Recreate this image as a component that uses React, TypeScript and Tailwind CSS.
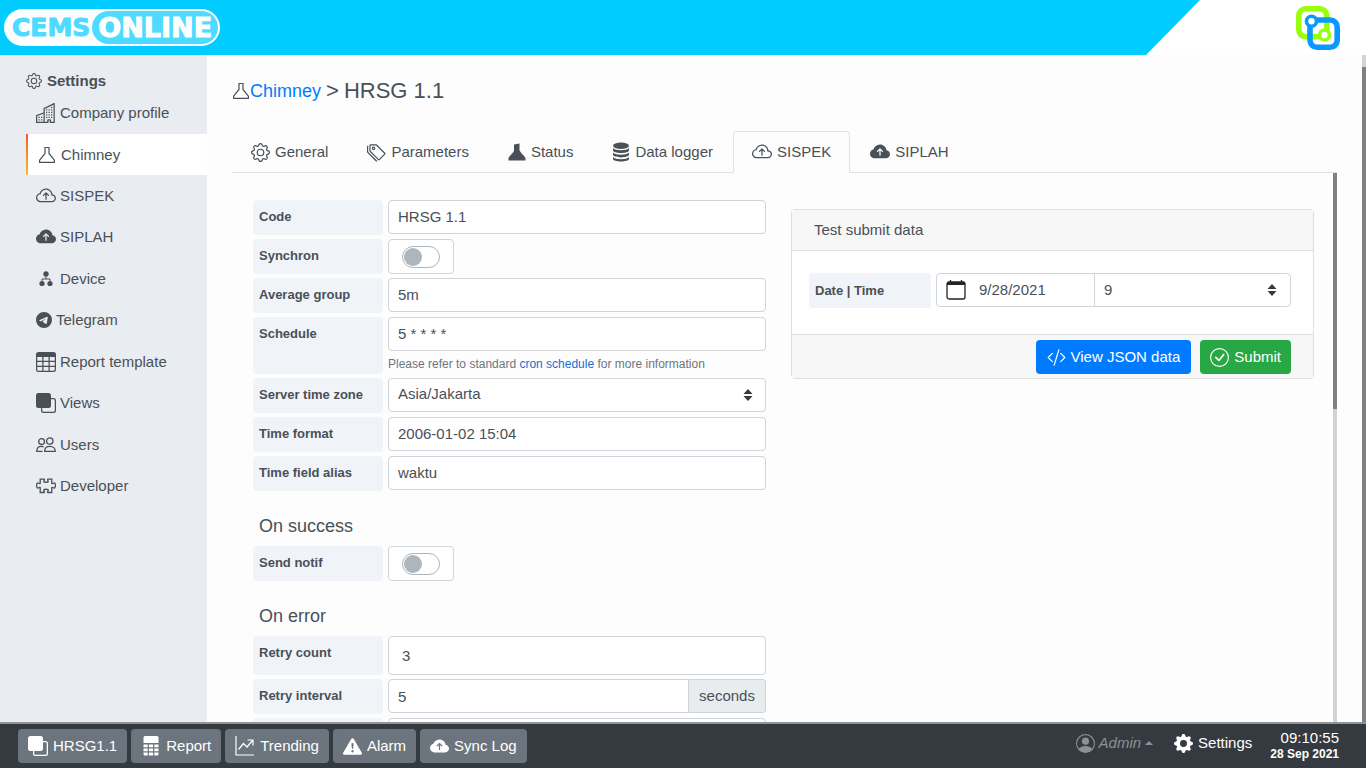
import React from "react";
import {
  BsBuildings,
  BsCheckCircle,
  BsCloudArrowUp,
  BsCloudArrowUpFill,
  BsCodeSlash,
  BsExclamationTriangleFill,
  BsFront,
  BsGear,
  BsGearFill,
  BsPersonCircle,
  BsTable,
  BsTags,
  BsTelegram,
} from "react-icons/bs";

type IconProps = { className?: string };

function Flask({ className = "" }: IconProps) {
  return (
    <svg viewBox="0 0 18 18" fill="none" stroke="currentColor" strokeWidth="1.2" className={className} aria-hidden="true">
      <path d="M6.500 1.500h5M7 1.500v6L1.600 14.200v2.200h14.800v-2.200L11 7.500v-6" />
    </svg>
  );
}

function FlaskSolid({ className = "" }: IconProps) {
  return (
    <svg viewBox="0 0 18 18" fill="currentColor" className={className} aria-hidden="true">
      <path d="M6 1.500 11.500.500V7.500c1 2 4 4.500 6 7.500v2.500H.5V15c1.500-3 5-5 5.500-7.500z" />
    </svg>
  );
}

function DeviceTree({ className = "" }: IconProps) {
  return (
    <svg viewBox="0 0 20 18" fill="currentColor" className={className} aria-hidden="true">
      <circle cx="10" cy="4" r="2.700" />
      <circle cx="6" cy="13.500" r="2.600" />
      <circle cx="14" cy="13.500" r="2.600" />
      <path d="M10 6v3M6 11V9h8v2" fill="none" stroke="currentColor" />
    </svg>
  );
}

function People({ className = "" }: IconProps) {
  return (
    <svg viewBox="0 0 20 16" fill="none" stroke="currentColor" strokeWidth="1.300" className={className} aria-hidden="true">
      <circle cx="13.800" cy="4" r="3.200" />
      <circle cx="5.600" cy="4.600" r="2.900" />
      <path d="M8.600 14.400c0-3 2-5 5.200-5s5.500 2 5.500 5zM6.500 14.400H.7c0-3.200 1.500-5 4.600-5 1 0 1.800.2 2.400.600" />
    </svg>
  );
}

function Puzzle({ className = "" }: IconProps) {
  return (
    <svg viewBox="0 0 20 16" fill="none" stroke="currentColor" strokeWidth="1.300" className={className} aria-hidden="true">
      <path d="M4.200 1.200h4c.8 1-.5 1.300-.5 2.300 0 1.200 4.600 1.200 4.600 0 0-1-1.300-1.300-.5-2.300h4v4.200c1.200.7 1.500-.5 2.400-.5 1.600 0 1.600 5.200 0 5.200-.9 0-1.200-1.200-2.400-.5v4.900h-4c-.8-1 .5-1.300.5-2.300 0-1.300-4.600-1.300-4.600 0 0 1 1.300 1.300.5 2.300h-4V9.600c-1.200-.7-1.500.5-2.400.5-1.600 0-1.600-5.200 0-5.200.9 0 1.200 1.200 2.400.5z" />
    </svg>
  );
}

function Database({ className = "" }: IconProps) {
  return (
    <svg viewBox="0 0 18 20" fill="currentColor" className={className} aria-hidden="true">
      <ellipse cx="9" cy="3.700" rx="8" ry="3.200" />
      <path d="M1 6c2 3 14 3 16 0v2.200c0 3.700-16 3.700-16 0zM1 10.600c2 3 14 3 16 0v2c0 3.700-16 3.700-16 0zM1 15c2 3 14 3 16 0v1.800c0 3.600-16 3.600-16 0z" />
    </svg>
  );
}

function Calculator({ className = "" }: IconProps) {
  return (
    <svg viewBox="0 0 16 20" fill="currentColor" className={className} aria-hidden="true">
      <path d="M2 0h12a1.500 1.500 0 0 1 1.500 1.500V7H.5V1.500A1.500 1.500 0 0 1 2 0zM.5 8.500h4.200v2.700H.5zM5.900 8.500h4.200v2.700H5.900zM11.300 8.500h4.200v2.700h-4.200zM.5 12.500h4.200v2.700H.5zM5.900 12.500h4.200v2.700H5.900zM11.300 12.500h4.200v2.700h-4.200zM.5 16.500h4.200v3H2a1.500 1.500 0 0 1-1.500-1.500zM5.900 16.500h4.200v3H5.900zM11.300 16.500h4.200V18a1.500 1.500 0 0 1-1.500 1.500h-2.700z" />
    </svg>
  );
}

function Trend({ className = "" }: IconProps) {
  return (
    <svg viewBox="0 0 20 20" fill="none" stroke="currentColor" strokeWidth="1.200" className={className} aria-hidden="true">
      <path d="M1 0v19h18M3.500 13.500l5-6 3.500 3.500 5.500-6.500M12.500 4H18v5.500" />
    </svg>
  );
}

function Calendar({ className = "" }: IconProps) {
  return (
    <svg viewBox="0 0 20 20" fill="none" stroke="currentColor" strokeWidth="1.300" className={className} aria-hidden="true">
      <rect x="1" y="2" width="18" height="17" rx="2" />
      <path d="M1 3.500h18" strokeWidth="3" />
      <path d="M4.500 0v2M15.500 0v2" />
    </svg>
  );
}

function Carets() {
  return (
    <svg viewBox="0 0 10 12" className="pointer-events-none absolute top-1/2 right-[13px] h-[12px] w-[10px] -translate-y-1/2 text-[#343a40]" fill="currentColor" aria-hidden="true">
      <path d="M5 0l4.500 5h-9zM5 12L.5 7h9z" />
    </svg>
  );
}

function BrandMark() {
  return (
    <svg viewBox="0 0 44 44" className="size-[44px]" fill="none" role="img" aria-label="Brand">
      <rect x="2.800" y="2.800" width="28" height="28" rx="7" stroke="#99ff0a" strokeWidth="5.600" />
      <rect x="14" y="14" width="27.200" height="27.200" rx="7" stroke="#0a99ff" strokeWidth="5.600" />
      <circle cx="28.500" cy="29" r="5" fill="#fff" stroke="#99ff0a" strokeWidth="3.600" />
      <circle cx="15.500" cy="15.300" r="5" fill="#fff" stroke="#0a99ff" strokeWidth="3.600" />
    </svg>
  );
}

const menu: { label: string; icon: React.ReactNode }[] = [
  { label: "SISPEK", icon: <BsCloudArrowUp className="size-[20px]" /> },
  { label: "SIPLAH", icon: <BsCloudArrowUpFill className="size-[20px]" /> },
  { label: "Device", icon: <DeviceTree className="h-[18px] w-[20px]" /> },
  { label: "Telegram", icon: <BsTelegram className="size-[16px]" /> },
  { label: "Report template", icon: <BsTable className="size-[20px]" /> },
  { label: "Views", icon: <BsFront className="size-[20px]" /> },
  { label: "Users", icon: <People className="h-[16px] w-[20px]" /> },
  { label: "Developer", icon: <Puzzle className="h-[16px] w-[20px]" /> },
];

const tabs: { label: string; icon: React.ReactNode }[] = [
  { label: "General", icon: <BsGear className="size-[19px]" /> },
  { label: "Parameters", icon: <BsTags className="size-[19px]" /> },
  { label: "Status", icon: <FlaskSolid className="size-[18px]" /> },
  { label: "Data logger", icon: <Database className="h-[20px] w-[18px]" /> },
  { label: "SISPEK", icon: <BsCloudArrowUp className="size-[20px]" /> },
  { label: "SIPLAH", icon: <BsCloudArrowUpFill className="size-[20px]" /> },
];

const shortcuts: { label: string; icon: React.ReactNode }[] = [
  { label: "HRSG1.1", icon: <BsFront className="size-[20px]" /> },
  { label: "Report", icon: <Calculator className="mx-[2px] h-[20px] w-[16px]" /> },
  { label: "Trending", icon: <Trend className="size-[20px]" /> },
  { label: "Alarm", icon: <BsExclamationTriangleFill className="size-[19px]" /> },
  { label: "Sync Log", icon: <BsCloudArrowUpFill className="size-[19px]" /> },
];

const field =
  "h-[34px] w-full min-w-0 rounded border border-[#ced4da] bg-white px-[9px] pb-[2px] text-[15px] text-[#495057] outline-none";

function Row({ id, label, children }: { id: string; label: string; children: React.ReactNode }) {
  return (
    <div className="flex gap-[5px]">
      <label htmlFor={id} className="min-h-[35px] w-[130px] shrink-0 rounded bg-[#f0f4f9] px-[6px] pt-[7px] text-[13px] leading-[19px] font-bold">
        {label}
      </label>
      <div className="min-w-0 flex-1">{children}</div>
    </div>
  );
}

function Toggle({ id }: { id: string }) {
  return (
    <div className="flex h-[35px] w-[66px] items-center rounded border border-[#ced4da] bg-white px-[13px]">
      <input
        id={id}
        type="checkbox"
        role="switch"
        className="flex h-[22px] w-[38px] appearance-none items-center rounded-full border border-[#adb5bd] px-px before:size-[18px] before:rounded-full before:bg-[#adb5bd] checked:justify-end"
      />
    </div>
  );
}

export default function App() {
  return (
    <div className="flex h-screen flex-col overflow-hidden bg-[#fdfdfd] font-['Liberation_Sans',Arial,sans-serif] text-[15px] leading-[22px] text-[#495057]">
      <header className="flex h-[55px] shrink-0 bg-white">
        <div className="flex flex-1 items-center bg-[#00ccff] pl-[4px] [clip-path:polygon(0_0,100%_0,calc(100%-54px)_100%,0_100%)]">
          <a href="#home" className="flex h-[37px] items-center gap-[2px] rounded-full bg-white pr-[2px] pl-[8px] font-['DejaVu_Sans',sans-serif] text-[25px] font-bold text-[#4ddbff]">
            <span className="[-webkit-text-stroke:1px_#4ddbff]">CEMS</span>
            <span className="flex h-[33px] items-center rounded-full bg-[#4ddbff] px-[6px] text-[27px] text-white [-webkit-text-stroke:1px_white]">ONLINE</span>
          </a>
        </div>
        <div className="flex w-[166px] items-center justify-end pr-[26px]">
          <BrandMark />
        </div>
      </header>

      <div className="flex min-h-0 flex-1">
        <nav className="w-[207px] shrink-0 bg-[#e9ecf1] pt-[15px] pl-[26px]">
          <div className="flex items-center gap-[5px] font-bold">
            <BsGear className="size-[16px]" />
            Settings
          </div>
          <a href="#company" className="flex h-[42px] items-center gap-[4px] pl-[10px]">
            <BsBuildings className="size-[20px]" />
            Company profile
          </a>
          <a href="#chimney" className="flex h-[41px] items-stretch bg-white">
            <span className="w-[2px] bg-linear-to-b from-[#f1592a] to-[#fbb914]" />
            <span className="flex items-center gap-[5px] pl-[10px]">
              <Flask className="size-[18px]" />
              Chimney
            </span>
          </a>
          <div className="grid h-[332px] auto-rows-fr">
            {menu.map((m) => (
              <a key={m.label} href={"#" + m.label} className="flex items-center gap-[4px] pl-[10px]">
                {m.icon}
                {m.label}
              </a>
            ))}
          </div>
        </nav>

        <main className="flex min-w-0 flex-1 flex-col pr-[25px] pl-[25px]">
          <h1 className="flex h-[76px] items-start gap-[5px] pt-[22px] text-[22px] leading-[28px]">
            <a href="#chimney" className="flex items-center text-[18px] text-[#007bff]">
              <Flask className="size-[18px] text-[#495057]" />
              Chimney
            </a>
            <span>&gt;</span>
            <span>HRSG 1.1</span>
          </h1>

          <div role="tablist" className="flex h-[42px] shrink-0 gap-px border-b border-[#dee2e6]">
            {tabs.map((t, i) => (
              <button
                key={t.label}
                role="tab"
                aria-selected={i === 4}
                className="-mb-px flex items-center gap-[5px] rounded-t border border-transparent px-[18px] aria-selected:border-[#dee2e6] aria-selected:border-b-[#fdfdfd]"
              >
                {t.icon}
                {t.label}
              </button>
            ))}
          </div>

          <div className="flex min-h-0 flex-1">
            <div className="grid min-w-0 flex-1 grid-cols-[513fr_523fr] items-start gap-[25px] overflow-hidden pr-[19px] pl-[21px]">
              <form className="flex flex-col gap-[4px] pt-[27px]">
                <Row id="code" label="Code">
                  <input id="code" className={field} defaultValue="HRSG 1.1" />
                </Row>
                <Row id="sync" label="Synchron">
                  <Toggle id="sync" />
                </Row>
                <Row id="avg" label="Average group">
                  <input id="avg" className={field} defaultValue="5m" />
                </Row>
                <Row id="schedule" label="Schedule">
                  <input id="schedule" className={field} defaultValue="5 * * * *" />
                  <p className="pt-[4px] pb-px text-[12px] leading-[18px] text-[#6c757d]">
                    Please refer to standard{" "}
                    <a href="#cron" className="text-[#1a6fd0]">cron schedule</a> for more information
                  </p>
                </Row>
                <Row id="tz" label="Server time zone">
                  <div className="relative">
                    <select id="tz" className={field + " appearance-none"}>
                      <option>Asia/Jakarta</option>
                    </select>
                    <Carets />
                  </div>
                </Row>
                <Row id="format" label="Time format">
                  <input id="format" className={field} defaultValue="2006-01-02 15:04" />
                </Row>
                <Row id="alias" label="Time field alias">
                  <input id="alias" className={field} defaultValue="waktu" />
                </Row>
                <h2 className="px-[6px] pt-[19px] pb-[4px] text-[18px] leading-[24px]">On success</h2>
                <Row id="notif" label="Send notif">
                  <Toggle id="notif" />
                </Row>
                <h2 className="px-[6px] pt-[19px] pb-[4px] text-[18px] leading-[24px]">On error</h2>
                <Row id="count" label="Retry count">
                  <input id="count" className="h-[39px] w-full rounded border border-[#ced4da] bg-white px-[13px] outline-none" defaultValue="3" />
                </Row>
                <Row id="interval" label="Retry interval">
                  <div className="flex">
                    <input id="interval" className="h-[34px] min-w-0 flex-1 rounded-l border border-[#ced4da] bg-white px-[9px] outline-none" defaultValue="5" />
                    <span className="flex w-[77px] items-center justify-center rounded-r border border-l-0 border-[#ced4da] bg-[#e9ecef]">seconds</span>
                  </div>
                </Row>
                <Row id="timeout" label="">
                  <input id="timeout" aria-label="Additional setting" className={field} />
                </Row>
              </form>

              <section className="mt-[36px] rounded border border-[#dfdfdf] bg-white">
                <h2 className="border-b border-[#dfdfdf] bg-[#f7f7f7] px-[22px] py-[9px]">Test submit data</h2>
                <div className="flex gap-[5px] px-[17px] pt-[22px] pb-[26px]">
                  <label htmlFor="date" className="h-[35px] w-[122px] shrink-0 rounded bg-[#f0f4f9] px-[6px] text-[13px] leading-[35px] font-bold">
                    Date | Time
                  </label>
                  <div className="mr-[5px] flex h-[34px] min-w-0 flex-1 rounded border border-[#ced4da]">
                    <div className="flex w-[158px] items-center gap-[13px] border-r border-[#ced4da] pl-[9px]">
                      <Calendar className="size-[20px] shrink-0 text-[#212529]" />
                      <input id="date" className="w-full min-w-0 outline-none" defaultValue="9/28/2021" />
                    </div>
                    <div className="relative flex-1">
                      <select aria-label="Hour" className="h-full w-full appearance-none px-[9px] outline-none">
                        <option>9</option>
                      </select>
                      <Carets />
                    </div>
                  </div>
                </div>
                <div className="flex justify-end gap-[9px] border-t border-[#dfdfdf] bg-[#f7f7f7] pt-[5px] pr-[22px] pb-[4px] text-white">
                  <button className="flex h-[34px] items-center gap-[5px] rounded bg-[#007bff] px-[11px]">
                    <BsCodeSlash className="size-[19px]" />
                    View JSON data
                  </button>
                  <button className="flex h-[34px] items-center gap-[5px] rounded bg-[#28a745] px-[10px]">
                    <BsCheckCircle className="size-[19px]" />
                    Submit
                  </button>
                </div>
              </section>
            </div>
            <div className="w-[4px] shrink-0 bg-[#d3d3d3]">
              <div className="h-[43%] bg-[#808080]" />
            </div>
          </div>
        </main>
        <div className="w-[4px] shrink-0 bg-[#808080]">
          <div className="h-[12px] bg-[#d3d3d3]" />
        </div>
      </div>

      <footer className="flex h-[46px] shrink-0 items-center gap-[4px] border-t-2 border-[#909498] bg-[#343a40] pr-[27px] pl-[18px] text-white">
        {shortcuts.map((s) => (
          <button key={s.label} className="flex h-[34px] items-center gap-[5px] rounded bg-[#6c757d] px-[10px]">
            {s.icon}
            {s.label}
          </button>
        ))}
        <button className="mr-[17px] mb-[6px] ml-auto flex items-center gap-[4px] text-[#8d9195] italic">
          <BsPersonCircle className="size-[19px]" />
          Admin
          <svg viewBox="0 0 8 4" className="h-[4px] w-[8px]" fill="currentColor" aria-hidden="true">
            <path d="M4 0l4 4H0z" />
          </svg>
        </button>
        <button className="mr-[14px] mb-[6px] flex items-center gap-[5px]">
          <BsGearFill className="size-[19px]" />
          Settings
        </button>
        <div className="text-right leading-[16px]">
          <div>09:10:55</div>
          <div className="text-[12px] font-bold">28 Sep 2021</div>
        </div>
      </footer>
    </div>
  );
}
